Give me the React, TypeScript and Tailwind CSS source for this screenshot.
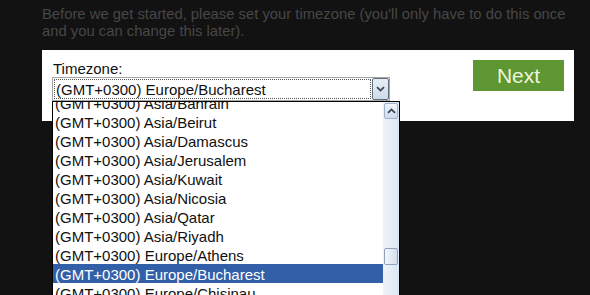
import React from 'react'

const zones = [
	'Asia/Bahrain',
	'Asia/Beirut',
	'Asia/Damascus',
	'Asia/Jerusalem',
	'Asia/Kuwait',
	'Asia/Nicosia',
	'Asia/Qatar',
	'Asia/Riyadh',
	'Europe/Athens',
	'Europe/Bucharest',
	'Europe/Chisinau',
]

function Caret({ up }: { up?: boolean }) {
	return (
		<svg width="9" height="6" viewBox="0 0 9 6" className={up ? 'rotate-180' : ''}>
			<path d="M1 1.2 L4.5 4.6 L8 1.2" fill="none" stroke="#3a4654" strokeWidth="1.8" />
		</svg>
	)
}

export default function App() {
	return (
		<div className="relative w-[590px] h-[295px] overflow-hidden bg-[#121212] font-['Liberation_Sans',Arial,sans-serif]">
			{/* Intro */}
			<div className="pt-[6px] pl-[42px] text-[14.8px] leading-[17px] text-[#474747]">
				<p>Before we get started, please set your timezone (you'll only have to do this once</p>
				<p>and you can change this later).</p>
			</div>

			{/* Panel */}
			<div className="relative ml-[42px] mt-[10px] w-[532px] h-[71px] bg-white pl-[10px] pt-[10px]">
				<div className="pl-[1px] text-[15px] leading-[17px] text-[#111]">Timezone:</div>
				<div className="flex w-[338px] h-[24px] border border-[#a5a5a5] bg-white">
					<div className="flex-1 m-[1px] border border-dotted border-[#555] pl-[1px] text-[15px] leading-[19px] text-[#111]">
						(GMT+0300) Europe/Bucharest
					</div>
					<div className="w-[17px] h-[22px] flex items-center justify-center rounded-[2px] border border-[#5f6d7d] bg-gradient-to-b from-[#e8eef6] to-[#cfdbe9]">
						<Caret />
					</div>
				</div>

				<button className="absolute left-[431px] top-[10px] w-[91px] h-[31px] bg-[#5e9631] text-[21px] leading-[31px] text-[#eef5dc]">
					Next
				</button>
			</div>

			{/* Open dropdown list */}
			<div className="absolute left-[52px] top-[101px] w-[348px] h-[200px] border border-black bg-white flex overflow-hidden">
				<div className="flex-1 overflow-hidden">
					<div className="mt-[-9px]">
						{zones.map((z) => (
							<div
								key={z}
								className={`h-[19px] pt-[1px] pl-[2px] text-[15px] leading-[19px] whitespace-nowrap ${
									z === 'Europe/Bucharest' ? 'bg-[#3260a8] text-white' : 'text-[#111]'
								}`}
							>
								(GMT+0300) {z}
							</div>
						))}
					</div>
				</div>
				<div className="relative w-[16px] bg-gradient-to-r from-[#eef3fa] to-[#dce7f4]">
					<div className="mx-[1px] mt-[1px] h-[16px] flex items-center justify-center rounded-[2px] border border-[#9fb3cb] bg-gradient-to-b from-[#f2f6fb] to-[#cddbec]">
						<Caret up />
					</div>
					<div className="absolute left-[1px] top-[146px] w-[14px] h-[17px] rounded-[2px] border border-[#8fa2ba] bg-gradient-to-r from-[#f4f7fb] to-[#d2deed]" />
				</div>
			</div>
		</div>
	)
}
